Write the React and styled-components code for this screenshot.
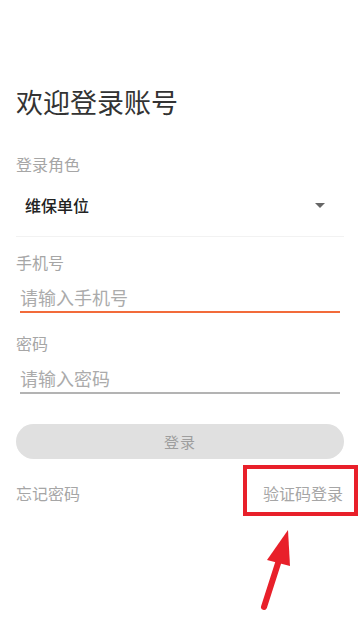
import styled, { createGlobalStyle } from "styled-components";

const GlobalStyle = createGlobalStyle`
  html, body {
    margin: 0;
    padding: 0;
    background: #fff;
  }
  body {
    font-family: "Noto Sans CJK SC", "Noto Sans", sans-serif;
  }
`;

const Page = styled.div`
  position: relative;
  width: 360px;
  height: 618px;
  overflow: hidden;
  padding: 88px 16px 0;
  box-sizing: border-box;
`;

const Title = styled.h1`
  margin: 0;
  font-size: 27px;
  line-height: 28px;
  font-weight: 400;
  color: #333;
`;

const Label = styled.div`
  margin-top: ${(p) => p.$top}px;
  font-size: 16px;
  line-height: 16px;
  color: #a6a6a6;
`;

const SelectRow = styled.div`
  display: flex;
  align-items: center;
  justify-content: space-between;
  margin-top: 24px;
  padding: 0 19px 22px 9px;
  border-bottom: 1px solid #f2f2f2;
  font-size: 16px;
  line-height: 18px;
  font-weight: 500;
  color: #222;
`;

const Caret = styled.span`
  width: 0;
  height: 0;
  border-left: 5px solid transparent;
  border-right: 5px solid transparent;
  border-top: 5px solid #666;
`;

const Input = styled.input`
  display: block;
  box-sizing: border-box;
  width: 320px;
  margin: ${(p) => p.$top}px 4px 0;
  height: 26px;
  padding: 0 0 4px;
  border: none;
  border-bottom: 2px solid ${(p) => (p.$focused ? "#f26b3a" : "#b3b3b3")};
  outline: none;
  font-family: inherit;
  font-size: 18px;
  line-height: 20px;
  color: #333;
  background: transparent;

  &::placeholder {
    color: #ababab;
  }
`;

const LoginButton = styled.button`
  display: block;
  width: 328px;
  height: 35px;
  margin-top: 30px;
  border: none;
  border-radius: 18px;
  background: #e0e0e0;
  color: #9e9e9e;
  font-family: inherit;
  font-size: 15px;
  letter-spacing: 1px;
`;

const Footer = styled.div`
  display: flex;
  justify-content: space-between;
  margin-top: 26px;
  font-size: 16px;
  line-height: 16px;
  color: #a6a6a6;
`;

const LinkText = styled.span`
  position: relative;
  margin-right: 1px;
`;

const Highlight = styled.span`
  position: absolute;
  left: -20px;
  right: -15px;
  top: -20px;
  bottom: -15px;
  border: 4px solid #e8202a;
  pointer-events: none;
`;

const Arrow = styled.svg`
  position: absolute;
  left: 255px;
  top: 524px;
`;

export default function App() {
  return (
    <>
      <GlobalStyle />
      <Page>
        <Title>欢迎登录账号</Title>
        <Label $top={40}>登录角色</Label>
        <SelectRow>
          <span>维保单位</span>
          <Caret />
        </SelectRow>
        <Label $top={17}>手机号</Label>
        <Input $top={17} $focused placeholder="请输入手机号" />
        <Label $top={22}>密码</Label>
        <Input $top={17} type="text" placeholder="请输入密码" />
        <LoginButton>登录</LoginButton>
        <Footer>
          <span>忘记密码</span>
          <LinkText>
            验证码登录
            <Highlight />
          </LinkText>
        </Footer>
        <Arrow width="45" height="90" viewBox="0 0 45 90">
          <line x1="9" y1="83" x2="26" y2="30" stroke="#e8202a" strokeWidth="6" strokeLinecap="round" />
          <polygon points="33,6 12,36 35,42" fill="#e8202a" />
        </Arrow>
      </Page>
    </>
  );
}
